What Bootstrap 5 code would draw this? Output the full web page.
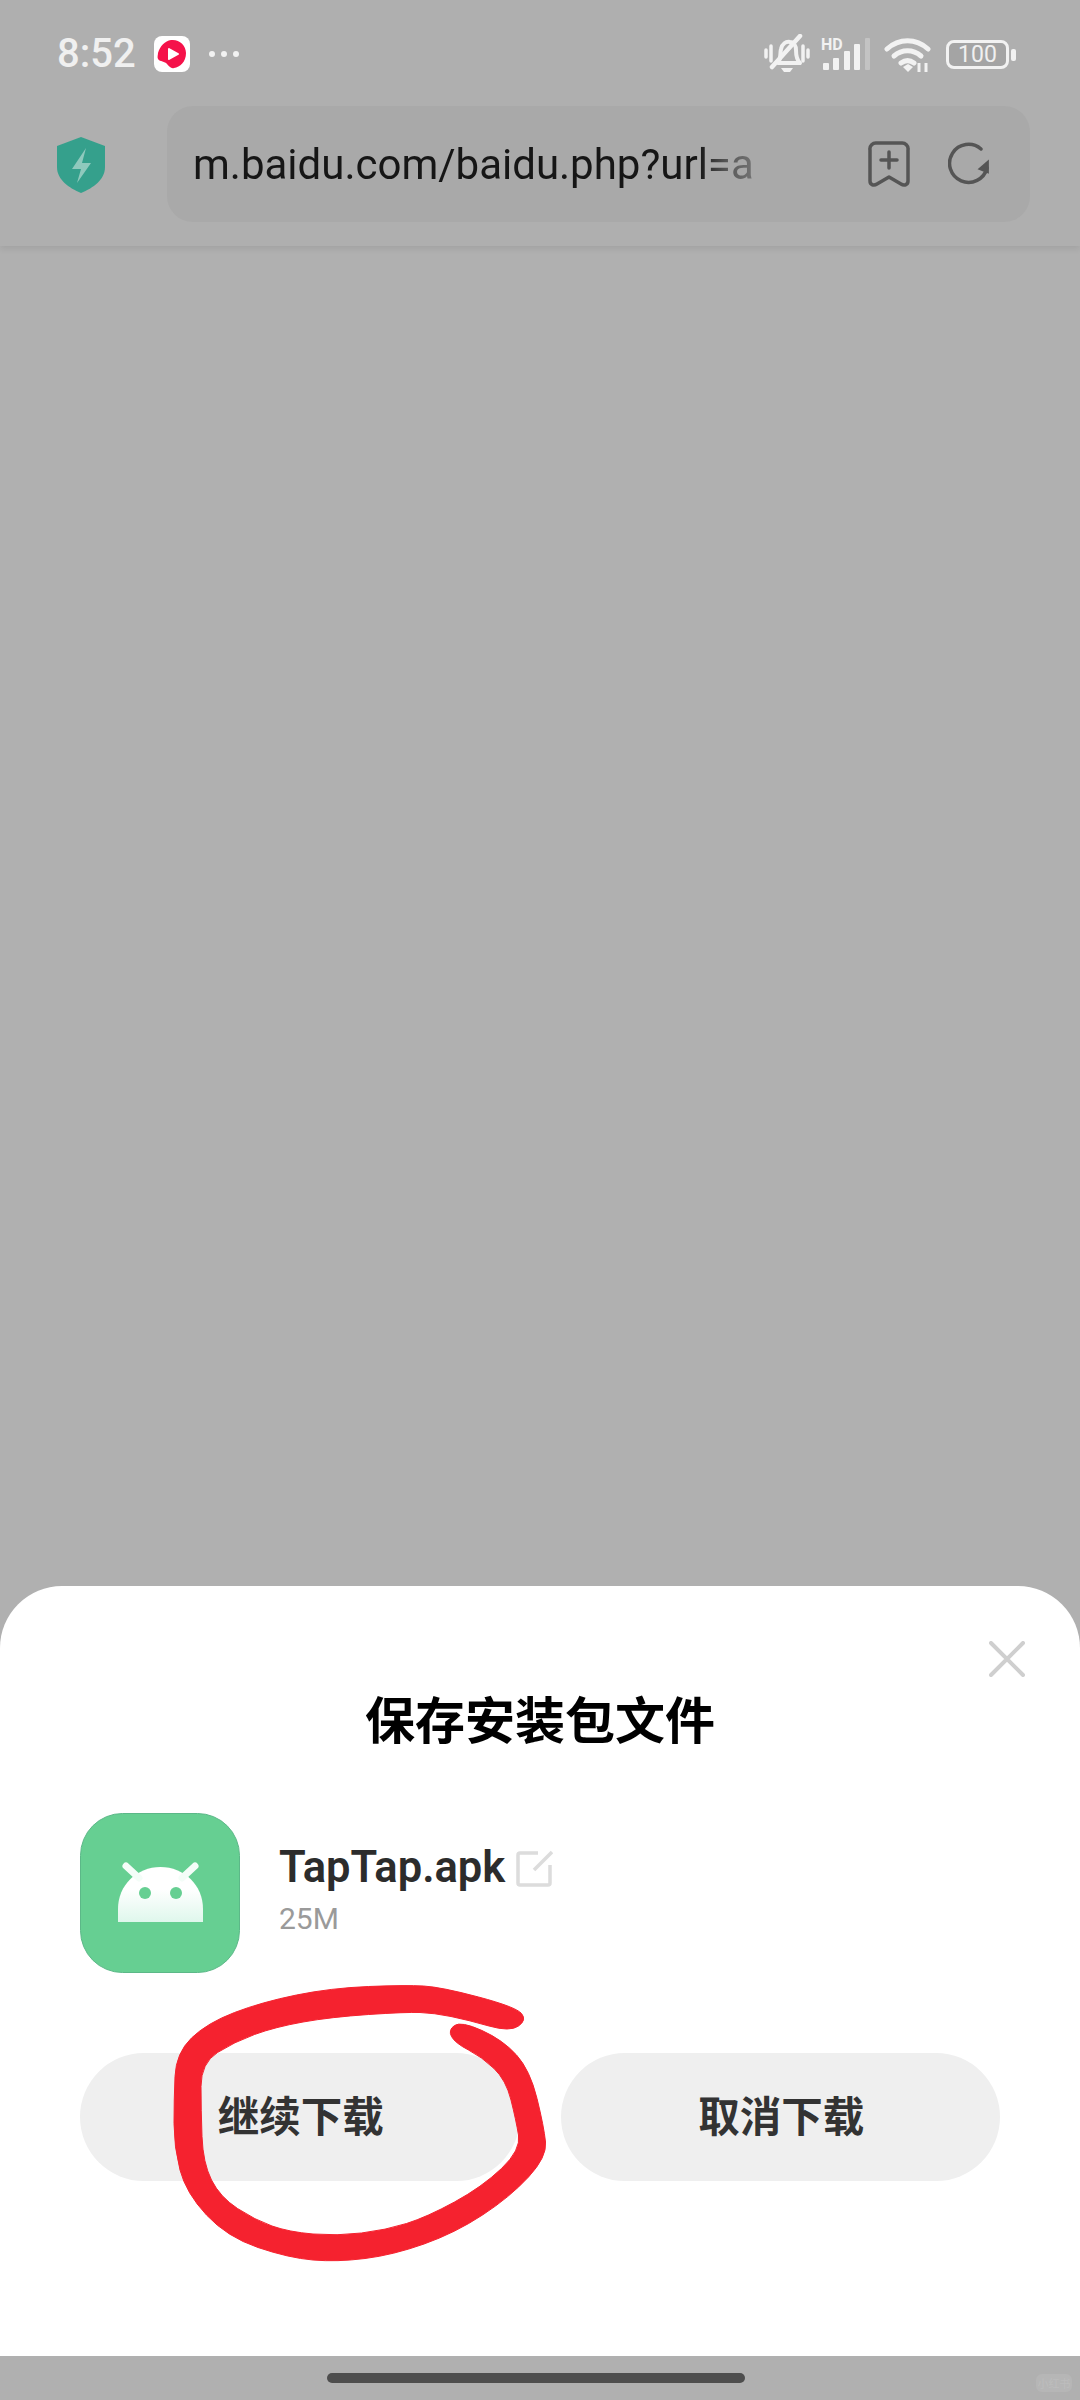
<!DOCTYPE html>
<html lang="zh">
<head>
    <meta charset="UTF-8">
    <title>保存安装包文件</title>
    <link href="https://cdn.jsdelivr.net/npm/bootstrap@5.3.0/dist/css/bootstrap.min.css" rel="stylesheet">
    <style>
        html, body { margin: 0; background: #b0b0b0; }
        body { font-family: Roboto, "Noto Sans CJK SC", sans-serif; }
        .page-wrap { position: relative; width: 1080px; height: 2400px; overflow: hidden; }

        /* 상단 */
        .top-head { height: 246px; background: #afafaf; box-shadow: 0 3px 6px rgba(0,0,0,.08); }
        .status-row { height: 106px; padding: 34px 64px 0 57px; }
        .clock { font-size: 40px; line-height: 40px; font-weight: 500; color: #f0f0f0; width: 97px; }
        .app-tile { width: 36px; height: 36px; display: block; margin-top: 2px; }
        .more-dots { margin-left: 19px; width: 30px; height: 8px; }
        .addr-row { padding-left: 57px; }
        .shield { width: 48px; height: 56px; margin-top: 31px; margin-right: 62px; display: block; }
        .addr-box { width: 863px; height: 116px; background: #a9a9a9; border-radius: 26px; padding-left: 26px; }
        .addr-text { width: 587px; font-size: 42px; color: #161616; white-space: nowrap;
            -webkit-mask-image: linear-gradient(to right, #000 86%, rgba(0,0,0,.55) 91%, rgba(0,0,0,.3) 97%, transparent 100%);
            mask-image: linear-gradient(to right, #000 86%, rgba(0,0,0,.55) 91%, rgba(0,0,0,.3) 97%, transparent 100%); }
        .batt-box { width: 63px; height: 29px; border: 3px solid #f2f2f2; border-radius: 8px; color: #f0f0f0;
            font-size: 23px; line-height: 23px; text-align: center; background: #a4a4a4; }

        /* 시트 */
        .sheet { height: 770px; background: #fff; border-radius: 62px 62px 0 0; padding: 55px 55px 0 80px; }
        .sheet-title { font-family: "Noto Sans CJK SC", sans-serif; font-size: 50px; line-height: 60px; font-weight: 700;
            color: #000; text-align: center; margin: 10px -55px 0 -80px; }
        .pkg-row { margin-top: 66px; }
        .pkg-icon { width: 160px; height: 160px; display: block; }
        .pkg-info { margin-left: 39px; padding-top: 30px; }
        .pkg-name { font-size: 43.5px; line-height: 50px; font-weight: 600; color: #2c2c2c; }
        .pkg-size { font-size: 30px; line-height: 36px; color: #9a9a9a; margin-top: 8px; }
        .btn-row { margin-top: 80px; margin-right: 25px; gap: 41px; }
        .dl-btn { flex: 1 1 0; height: 128px; background: #efefef; border: 0; border-radius: 64px; color: #333;
            padding: 0 0 5px 2px; font-family: "Noto Sans CJK SC", sans-serif; font-size: 41.5px; font-weight: 700; }
        .home-area { height: 44px; padding-right: 8px; }
        .home-bar { width: 418px; height: 10px; background: #4e4e4e; border-radius: 5px; margin-top: 17px; }
        .wm-tag { position: absolute; left: 1036px; top: 2374px; width: 36px; height: 18px; border-radius: 6px;
            background: #b6b6b6; color: #bdbdbd; font-size: 11px; line-height: 18px; text-align: center;
            font-family: "Noto Sans CJK SC", sans-serif; }
        .ink-mark { position: absolute; left: 0; top: 0; pointer-events: none; }
    </style>
</head>
<body>
<div class="page-wrap d-flex flex-column">
    <!-- 상단 메뉴 -->
    <div class="top-head">
        <div class="status-row d-flex align-items-start">
            <div class="clock">8:52</div>
            <svg class="app-tile" viewBox="0 0 36 36">
                <rect width="36" height="36" rx="8" fill="#fff"/>
                <path d="M17 4c8-1 15 5 15 13 0 9-6 14-12 15-3 1-5-2-7-4-2-3-7-2-9-5-1-2 0-4 0-6 2-7 7-12 13-13z" fill="#f5124a"/>
                <path d="M15 13l9 5-9 5z" fill="#fff" stroke="#fff" stroke-width="2" stroke-linejoin="round"/>
            </svg>
            <svg class="more-dots mt-3" viewBox="0 0 30 8"><g fill="#f2f2f2"><circle cx="3" cy="4" r="3"/><circle cx="15" cy="4" r="3"/><circle cx="27" cy="4" r="3"/></g></svg>
            <div class="flex-grow-1"></div>
            <!-- 진동 -->
            <svg width="46" height="40" viewBox="0 0 46 40" class="d-block">
                <g fill="none" stroke="#f2f2f2" stroke-linecap="round">
                    <path d="M2 16v7M7 12v15M39 12v15M44 16v7" stroke-width="3.5"/>
                    <path d="M14 29c3-4 2-10 3-14 1-5 5-8 9-7 4 0 6 4 6 8 0 5 1 10 4 13z" stroke-width="4" stroke-linejoin="round"/>
                    <path d="M8 33L36 2" stroke-width="4.5"/>
                </g>
                <path d="M17 34h12l-3 4h-6z" fill="#f2f2f2"/>
            </svg>
            <!-- 신호 -->
            <svg width="50" height="34" viewBox="0 0 50 34" class="d-block" style="margin:3px 0 0 11px">
                <text x="0" y="13" font-family="Roboto" font-weight="700" font-size="16" fill="#f2f2f2">HD</text>
                <g fill="#f2f2f2">
                    <rect x="2" y="26" width="6" height="7" rx="1"/>
                    <rect x="12" y="21" width="6" height="12" rx="1"/>
                    <rect x="23" y="14" width="6" height="19" rx="1"/>
                    <rect x="33" y="7" width="6" height="26" rx="1"/>
                    <rect x="44" y="1" width="5" height="32" rx="1" opacity=".3"/>
                </g>
            </svg>
            <!-- 와이파이 -->
            <svg width="47" height="36" viewBox="0 0 47 36" class="d-block" style="margin:3px 0 0 13px">
                <g fill="none" stroke="#f2f2f2" stroke-width="5" stroke-linecap="round">
                    <path d="M3 12c12-11 29-11 41 0"/>
                    <path d="M10 19c8-7 19-7 27 0"/>
                    <path d="M17 26c4-3 9-3 13 0"/>
                </g>
                <path d="M19 30l5-3 5 3-5 5z" fill="#f2f2f2"/>
                <path d="M35 26v9M42 26v9" stroke="#f2f2f2" stroke-width="3"/>
            </svg>
            <!-- 배터리 -->
            <div class="batt-box" style="margin:6px 0 0 15px">100</div>
            <svg width="5" height="12" viewBox="0 0 5 12" class="d-block" style="margin:15px 0 0 2px"><rect width="5" height="12" rx="2" fill="#f2f2f2"/></svg>
        </div>

        <div class="addr-row d-flex align-items-start">
            <svg class="shield" viewBox="0 0 48 56">
                <path d="M24 0l24 9v21c0 13-12 21-24 26C12 51 0 43 0 30V9z" fill="#35a08c"/>
                <path d="M29 11L15 32h9l-4 14 14-20h-9z" fill="#8fc9bd"/>
            </svg>
            <div class="addr-box d-flex align-items-center">
                <div class="addr-text">m.baidu.com/baidu.php?url=a</div>
                <svg width="42" height="46" viewBox="0 0 42 46" class="d-block" style="margin:0 0 0 88px">
                    <path d="M9 2h24a6 6 0 0 1 7 7v31c0 4-4 5-7 3l-12-7-12 7c-3 2-7 1-7-3V9a6 6 0 0 1 7-7z" fill="none" stroke="#555" stroke-width="3.5" stroke-linejoin="round"/>
                    <path d="M21 11v16M13 19h16" stroke="#555" stroke-width="3.5" stroke-linecap="round"/>
                </svg>
                <svg width="44" height="44" viewBox="0 0 44 44" class="d-block" style="margin-left:38px">
                    <path d="M39 26A19 19 0 1 1 33 7" fill="none" stroke="#555" stroke-width="3.5" stroke-linecap="round"/>
                    <path d="M42 31l-12-2 9-12z" fill="#555" transform="rotate(12 38 26)"/>
                </svg>
            </div>
        </div>
    </div>

    <div class="flex-grow-1"></div>

    <!-- 저장 시트 -->
    <div class="sheet">
        <div class="d-flex justify-content-end">
            <svg width="36" height="36" viewBox="0 0 36 36" class="d-block">
                <path d="M2 2l32 32M34 2L2 34" stroke="#cfcfcf" stroke-width="4" stroke-linecap="round"/>
            </svg>
        </div>
        <div class="sheet-title">保存安装包文件</div>

        <div class="pkg-row d-flex align-items-start">
            <svg class="pkg-icon" viewBox="0 0 160 160">
                <defs>
                    <linearGradient id="robotFill" x1="0" y1="0" x2="0" y2="1">
                        <stop offset="0.4" stop-color="#ffffff"/>
                        <stop offset="1" stop-color="#dff7ec"/>
                    </linearGradient>
                </defs>
                <rect x=".5" y=".5" width="159" height="159" rx="42" fill="#66cf92" stroke="#5cb888"/>
                <path d="M38 109V96C38 72 57 54 80.500 54S123 72 123 96V109Z" fill="url(#robotFill)"/>
                <path d="M46 53l13 12M115 53l-13 12" stroke="#f4fdf8" stroke-width="7" stroke-linecap="round"/>
                <circle cx="65" cy="80" r="6" fill="#66cf92"/>
                <circle cx="96" cy="80" r="6" fill="#66cf92"/>
            </svg>
            <div class="pkg-info">
                <div class="d-flex align-items-center">
                    <span class="pkg-name">TapTap.apk</span>
                    <svg width="37" height="37" viewBox="0 0 37 37" class="d-block" style="margin-left:11px">
                        <path d="M22 3H4a2 2 0 0 0-2 2v28a2 2 0 0 0 2 2h28a2 2 0 0 0 2-2V15" fill="none" stroke="#dcdcdc" stroke-width="3.5"/>
                        <path d="M18 20L36 2" stroke="#dcdcdc" stroke-width="3.5"/>
                    </svg>
                </div>
                <div class="pkg-size">25M</div>
            </div>
        </div>

        <div class="btn-row d-flex">
            <button type="button" class="btn dl-btn">继续下载</button>
            <button type="button" class="btn dl-btn">取消下载</button>
        </div>
    </div>

    <div class="home-area d-flex justify-content-center">
        <div class="home-bar"></div>
    </div>
    <div class="wm-tag">小红书</div>

    <!-- 빨간 표시 -->
    <svg class="ink-mark" width="1080" height="2400" viewBox="0 0 1080 2400">
        <path id="inkLoop" fill="#f5222f" stroke="#f5222f" stroke-width="1"/>
    </svg>
</div>

<script src="https://cdn.jsdelivr.net/npm/bootstrap@5.3.0/dist/js/bootstrap.bundle.min.js"></script>
<script>
    // 손으로 그린 동그라미 외곽선
    const pts = [[527,2020],[516,2007],[441,1987],[406,1985],[331,1988],[262,2002],[207,2023],[176,2053],[174,2100],[174,2147],[186,2193],[227,2237],[289,2258],[337,2262],[393,2255],[455,2233],[510,2197],[547,2157],[544,2127],[530,2070],[503,2040],[461,2021],[448,2030],[455,2043],[482,2057],[506,2080],[516,2120],[521,2150],[482,2187],[427,2217],[386,2230],[337,2236],[289,2232],[255,2220],[220,2197],[203,2163],[201,2110],[201,2063],[234,2042],[275,2027],[331,2017],[406,2012],[434,2013],[468,2020],[510,2032]];
    const mid = (a, b) => [(a[0] + b[0]) / 2, (a[1] + b[1]) / 2];
    let d = 'M' + mid(pts[pts.length - 1], pts[0]).join(' ');
    pts.forEach((p, i) => {
        const m = mid(p, pts[(i + 1) % pts.length]);
        d += ' Q' + p.join(' ') + ' ' + m.join(' ');
    });
    document.getElementById('inkLoop').setAttribute('d', d + 'Z');
</script>
</body>
</html>
